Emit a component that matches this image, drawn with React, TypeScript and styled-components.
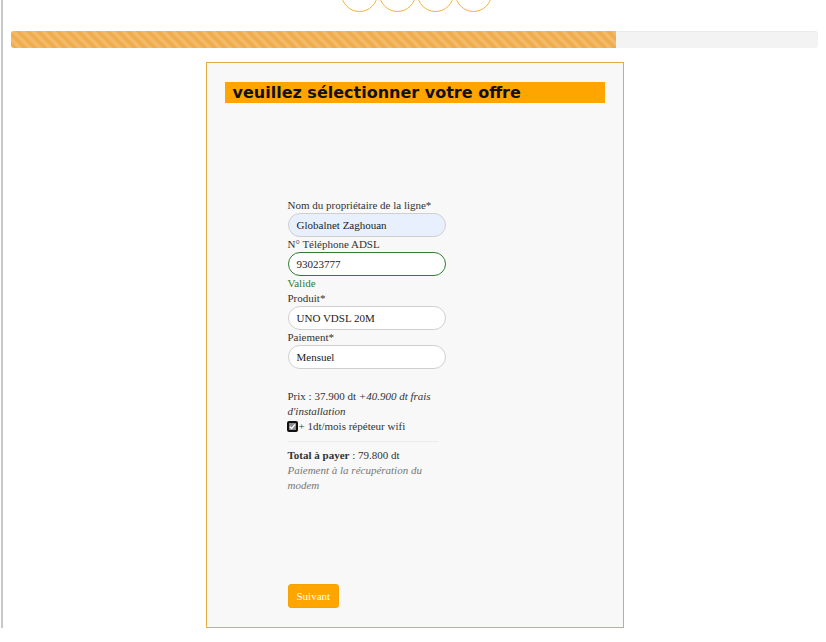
import styled, { createGlobalStyle } from "styled-components";

const GlobalStyle = createGlobalStyle`
  html, body {
    margin: 0;
    padding: 0;
    background: #fff;
    overflow: hidden;
  }
  body {
    font-family: "Liberation Serif", "DejaVu Serif", serif;
    color: #333;
  }
`;

const Page = styled.div`
  margin-left: 1px;
  border-left: 2px solid #c8c8c8;
  padding: 0 8px 0 8px;
  min-height: 642px;
  box-sizing: border-box;
`;

const Steps = styled.div`
  display: flex;
  justify-content: center;
  gap: 1px;
  margin-top: -25px;
  padding-left: 4px;
`;

const Step = styled.div`
  width: 35px;
  height: 35px;
  border: 1.5px solid #f5b335;
  border-radius: 50%;
  background: #fff;
`;

const Progress = styled.div`
  margin-top: 19px;
  height: 17px;
  background: #f3f3f3;
  border-radius: 3px;
  overflow: hidden;
  box-shadow: inset 0 1px 1px rgba(0, 0, 0, 0.04);
`;

const ProgressFill = styled.div`
  height: 100%;
  background-color: #f0ad4e;
  background-image: linear-gradient(
    45deg,
    rgba(255, 255, 255, 0.15) 25%,
    transparent 25%,
    transparent 50%,
    rgba(255, 255, 255, 0.15) 50%,
    rgba(255, 255, 255, 0.15) 75%,
    transparent 75%,
    transparent
  );
  background-size: 10px 10px;
`;

const Card = styled.div`
  width: 418px;
  height: 566px;
  box-sizing: border-box;
  margin: 14px auto 0;
  border: 1px solid #e3ac3f;
  background: #f8f8f8;
  padding: 19px 18px 19px;
  display: flex;
  flex-direction: column;
`;

const Heading = styled.h2`
  margin: 0;
  height: 21px;
  background: #ffa500;
  color: #111;
  font-family: "DejaVu Sans", "Open Sans", sans-serif;
  font-weight: bold;
  font-size: 16px;
  line-height: 22px;
  padding-left: 8px;
  white-space: nowrap;
  overflow: hidden;
`;

const Form = styled.div`
  margin: 95px 0 0 63px;
  width: 158px;
  display: flex;
  flex-direction: column;
  flex: 1;
  font-size: 11px;
  line-height: 15px;
`;

const Label = styled.label`
  display: block;
  color: #333;
`;

const Input = styled.div<{ $autofill?: boolean; $valid?: boolean }>`
  height: 24px;
  box-sizing: border-box;
  border-radius: 12px;
  border: ${(p) => (p.$valid ? "1.5px solid #2e7d32" : "1px solid #cfcfcf")};
  background: ${(p) => (p.$autofill ? "#e8f0fe" : "#fff")};
  padding-left: 8px;
  display: flex;
  align-items: center;
  color: #222;
  font-size: 11px;
`;

const Valid = styled.div`
  color: #2e7d32;
`;

const Summary = styled.div`
  margin-top: 20px;
`;

const Line = styled.div`
  color: #333;
`;

const Em = styled.em`
  font-style: italic;
`;

const CheckRow = styled.div`
  display: flex;
  align-items: center;
  gap: 1px;
  margin-left: -1px;
`;

const Check = styled.span`
  width: 11px;
  height: 11px;
  box-sizing: border-box;
  border: 2px solid #111;
  border-radius: 2px;
  background: #8a8a8a;
  display: inline-flex;
  align-items: center;
  justify-content: center;
`;

const Rule = styled.hr`
  border: 0;
  border-top: 1px solid #ececec;
  margin: 7px 8px 6px 0;
`;

const Muted = styled.div`
  color: #777;
  font-style: italic;
`;

const Button = styled.button`
  margin-top: auto;
  align-self: flex-start;
  height: 24px;
  padding: 0 8px;
  border: 1px solid #f5a300;
  border-radius: 3px;
  background: #ffa500;
  color: #fff;
  font-family: "Liberation Serif", "DejaVu Serif", serif;
  font-size: 11px;
  cursor: pointer;
`;

export default function App() {
  return (
    <>
      <GlobalStyle />
      <Page>
        <Steps>
          <Step />
          <Step />
          <Step />
          <Step />
        </Steps>
        <Progress>
          <ProgressFill style={{ width: "75%" }} />
        </Progress>
        <Card>
          <Heading>veuillez sélectionner votre offre</Heading>
          <Form>
            <Label>Nom du propriétaire de la ligne*</Label>
            <Input $autofill>Globalnet Zaghouan</Input>
            <Label>N° Téléphone ADSL</Label>
            <Input $valid>93023777</Input>
            <Valid>Valide</Valid>
            <Label>Produit*</Label>
            <Input>UNO VDSL 20M</Input>
            <Label>Paiement*</Label>
            <Input>Mensuel</Input>
            <Summary>
              <Line>
                Prix : 37.900 dt <Em>+40.900 dt frais d'installation</Em>
              </Line>
              <CheckRow>
                <Check>
                  <svg width="7" height="7" viewBox="0 0 8 8">
                    <path d="M1 4.2 L3.1 6.2 L7 1.6" fill="none" stroke="#fff" strokeWidth="1.6" />
                  </svg>
                </Check>
                <span>+ 1dt/mois répéteur wifi</span>
              </CheckRow>
              <Rule />
              <Line>
                <b>Total à payer</b> : 79.800 dt
              </Line>
              <Muted>Paiement à la récupération du modem</Muted>
            </Summary>
            <Button>Suivant</Button>
          </Form>
        </Card>
      </Page>
    </>
  );
}
